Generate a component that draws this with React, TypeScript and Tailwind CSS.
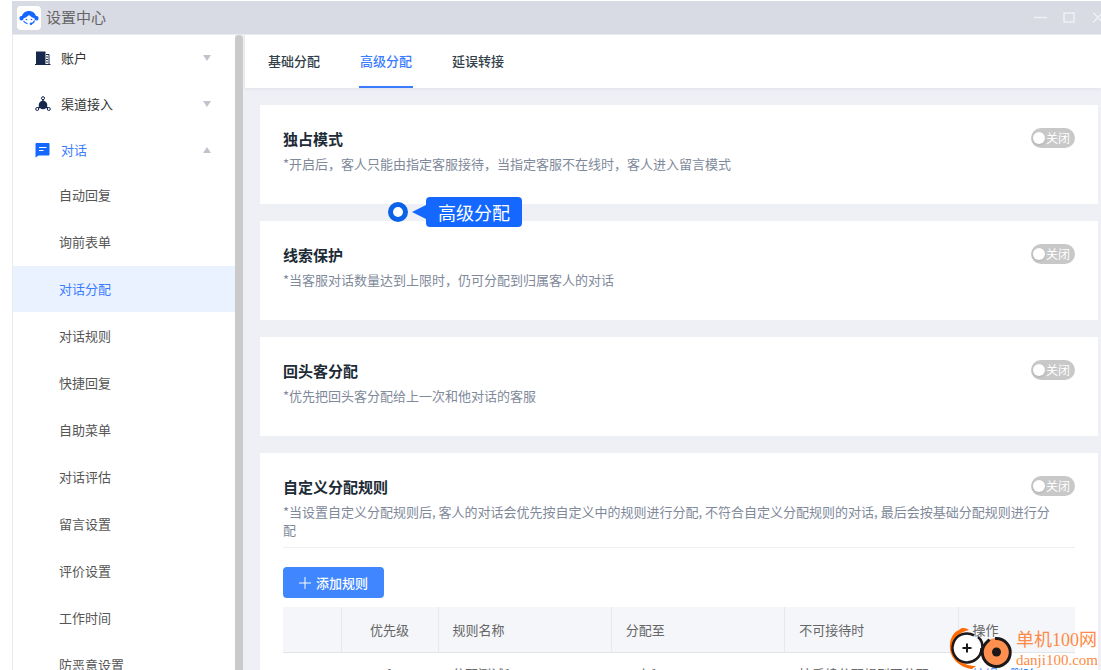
import { useState } from 'react';
import type { ReactNode } from 'react';
import clsx from 'clsx';

const subItems = [
  '自动回复',
  '询前表单',
  '对话分配',
  '对话规则',
  '快捷回复',
  '自助菜单',
  '对话评估',
  '留言设置',
  '评价设置',
  '工作时间',
  '防恶意设置',
];

const tabs = ['基础分配', '高级分配', '延误转接'];

function Logo() {
  return (
    <span className="flex h-6 w-6 items-center justify-center rounded bg-white">
      <svg viewBox="0 0 20 16" className="h-4 w-5">
        <path d="M2.500 7.500C3.500 3 6.500 1 10 1s6.500 2 7.500 6.500l-2.300.8C13.500 7.500 11.500 6.500 10 5 8.500 6.500 6.500 7.500 4.800 8.300z" fill="#1467ff" />
        <rect x="0.500" y="6" width="4" height="4.500" rx="1.800" fill="#1467ff" />
        <rect x="15.500" y="6" width="4" height="4.500" rx="1.800" fill="#1467ff" />
        <circle cx="7.500" cy="9.500" r="0.800" fill="#1467ff" />
        <circle cx="12.500" cy="9.500" r="0.800" fill="#1467ff" />
        <path d="M4.500 11c1 1.600 2.500 2.300 4 2.600M15.500 10.500c-.4 1.800-1.500 2.800-3 3.200" fill="none" stroke="#1467ff" strokeWidth="1.200" />
        <circle cx="12" cy="13.800" r="1.300" fill="#1467ff" />
      </svg>
    </span>
  );
}

function AccountIcon() {
  return (
    <svg viewBox="0 0 16 15" className="h-[15px] w-4">
      <path d="M1 0.500h9.500v13H1z" fill="#16284c" />
      <path d="M0 13.500h15.500M11 3.500h3v10" fill="none" stroke="#16284c" strokeWidth="1" />
      <path d="M11 6h2M11 8.500h2M11 11h2" stroke="#16284c" strokeWidth="1" />
    </svg>
  );
}

function ChannelIcon() {
  return (
    <svg viewBox="0 0 16 16" className="h-4 w-4">
      <circle cx="8" cy="9" r="4.300" fill="#16284c" />
      <path d="M8 3v4M5 11l-2.500 1.500M11 11l2.500 1.500" stroke="#16284c" strokeWidth="1.500" />
      <g fill="#fff" stroke="#16284c" strokeWidth="1">
        <circle cx="8" cy="2.200" r="1.500" />
        <circle cx="2.200" cy="13" r="1.500" />
        <circle cx="13.800" cy="13" r="1.500" />
      </g>
    </svg>
  );
}

function ChatIcon() {
  return (
    <svg viewBox="0 0 16 16" className="h-4 w-4">
      <path d="M1.500 1h12a1 1 0 0 1 1 1v10.500a1 1 0 0 1-1 1H3.500l-3 2V2a1 1 0 0 1 1-1z" fill="#1467ff" />
      <path d="M4 5.500h7.500M4 8.500h4.500" stroke="#fff" strokeWidth="1.200" />
    </svg>
  );
}

const groups = [
  { label: '账户', icon: <AccountIcon />, open: false },
  { label: '渠道接入', icon: <ChannelIcon />, open: false },
  { label: '对话', icon: <ChatIcon />, open: true },
];

function TitleBar() {
  return (
    <header className="mt-px flex h-[34px] shrink-0 items-center justify-between overflow-hidden border-b border-[#e9eaf0] bg-[#d8dae4] pl-[5px]">
      <div className="flex items-center gap-[5px]">
        <Logo />
        <h1 className="text-[15px] text-[#666]">设置中心</h1>
      </div>
      <div className="-mr-1 flex items-center gap-4 text-[#f0f1f5]">
        <button aria-label="最小化">
          <svg viewBox="0 0 13 13" className="h-[13px] w-[13px]">
            <path d="M0 6.500h13" stroke="currentColor" strokeWidth="1.500" />
          </svg>
        </button>
        <button aria-label="最大化">
          <svg viewBox="0 0 13 13" className="h-[13px] w-[13px]">
            <rect x="1" y="2" width="10" height="9" fill="none" stroke="currentColor" strokeWidth="1.500" />
          </svg>
        </button>
        <button aria-label="关闭窗口">
          <svg viewBox="0 0 13 13" className="h-[13px] w-[13px]">
            <path d="M1 1.500l10 10M11 1.500l-10 10" stroke="currentColor" strokeWidth="1.300" />
          </svg>
        </button>
      </div>
    </header>
  );
}

function Sidebar() {
  const [active, setActive] = useState('对话分配');

  return (
    <nav className="w-[222px] shrink-0 bg-white">
      {groups.map((g) => (
        <button
          key={g.label}
          aria-expanded={g.open}
          className={clsx('flex h-[46px] w-full items-center pl-[22px] pr-6', g.open ? 'text-[#3b7cff]' : 'text-[#333]')}
        >
          {g.icon}
          <span className="ml-[10px]">{g.label}</span>
          <svg viewBox="0 0 8 6" className="ml-auto h-[6px] w-2">
            <path d={g.open ? 'M0 6L4 0l4 6z' : 'M0 0l4 6 4-6z'} fill="#c0c4cc" />
          </svg>
        </button>
      ))}
      <ul>
        {subItems.map((item) => (
          <li key={item} className="pb-px first:-mt-px">
            <a
              href="#"
              onClick={() => setActive(item)}
              className={clsx(
                'flex h-[46px] items-center pl-[46px]',
                item === active ? 'bg-[#ebf2ff] text-[#3b7cff]' : 'text-[#555]'
              )}
            >
              {item}
            </a>
          </li>
        ))}
      </ul>
    </nav>
  );
}

function Toggle({ label }: { label: string }) {
  return (
    <label className="relative flex h-5 w-11 shrink-0 items-center justify-end rounded-full bg-[#c8c8c8] pr-[5px] text-xs text-white">
      <input
        type="checkbox"
        role="switch"
        aria-label={label}
        className="absolute left-[2px] top-1 h-3 w-3 appearance-none rounded-full bg-white shadow"
      />
      关闭
    </label>
  );
}

function Card({ title, desc, children }: { title: string; desc: ReactNode; children?: ReactNode }) {
  return (
    <section className="bg-white px-[23px] pb-[31px] pt-[23px]">
      <div className="flex items-start justify-between">
        <h2 className="text-[15px] font-bold leading-[22px] text-[#1c2b36]">{title}</h2>
        <Toggle label={title} />
      </div>
      <p className="mt-[5px] leading-[18px] text-[#80899a]">{desc}</p>
      {children}
    </section>
  );
}

function RuleTable() {
  const th = 'h-[45px] border-r border-[#e6e8ec] px-[14px] font-normal';
  const td = 'h-[42px] px-[14px]';

  return (
    <table className="mt-[9px] w-full table-fixed border-collapse text-left text-[#666]">
      <thead>
        <tr className="border-b border-[#e2e4e8] bg-[#f4f6fa]">
          <th className={clsx(th, 'w-[58px]')}></th>
          <th className={clsx(th, 'w-[97px] text-center')}>优先级</th>
          <th className={th}>规则名称</th>
          <th className={th}>分配至</th>
          <th className={th}>不可接待时</th>
          <th className="w-[117px] px-[14px] font-normal">操作</th>
        </tr>
      </thead>
      <tbody>
        <tr>
          <td className={td}>≡</td>
          <td className={clsx(td, 'text-center')}>1</td>
          <td className={td}>分配测试1</td>
          <td className={td}>ctrlr1</td>
          <td className={td}>按后续分配规则再分配</td>
          <td className={clsx(td, 'text-[#3b7cff]')}>
            <a href="#">编辑</a>
            <a href="#" className="ml-3">删除</a>
          </td>
        </tr>
      </tbody>
    </table>
  );
}

function Callout() {
  return (
    <div className="absolute left-[388px] top-[197px] flex items-center">
      <span className="h-5 w-5 rounded-full border-[5px] border-[#0b62e6] bg-white" />
      <svg viewBox="0 0 14 14" className="ml-1 h-[14px] w-[14px]">
        <path d="M0 7L14 0v14z" fill="#1467ff" />
      </svg>
      <span className="rounded-sm bg-[#1467ff] px-3 text-lg leading-[30px] text-white">高级分配</span>
    </div>
  );
}

function Watermark() {
  return (
    <div className="absolute bottom-0 right-[3px] flex items-end gap-[3px] font-['Liberation_Serif','Noto_Sans_CJK_SC',serif] text-[#ff8a45]">
      <svg viewBox="0 0 64 44" className="h-11 w-16">
        <path d="M20 4c-3-2-7-3-10 0C3 7 0 15 1 23c1 11 12 19 22 20l4-3C16 40 5 34 4 23 3 15 8 7 20 4z" fill="#ff6a00" />
        <path d="M25 9.300A14.500 14.500 0 1 0 32.500 22" fill="#fff" stroke="#1c1718" strokeWidth="2.500" />
        <path d="M29 11c4 3 5 9 4 14" fill="none" stroke="#1c1718" strokeWidth="2.500" />
        <circle cx="47.500" cy="26" r="14" fill="#ff8f4f" />
        <path d="M46 12.500A14 14 0 1 1 36.500 17.500M36.500 17.500l4-4" fill="none" stroke="#1c1718" strokeWidth="3" />
        <circle cx="47.500" cy="26" r="4.500" fill="#1c1718" />
        <path d="M13.500 22h9M18 17.500v9" stroke="#1c1718" strokeWidth="2" />
      </svg>
      <div className="flex flex-col whitespace-nowrap">
        <span className="text-lg leading-5">单机100网</span>
        <span className="text-[15px] leading-5">danji100.com</span>
      </div>
    </div>
  );
}

export default function App() {
  const [tab, setTab] = useState('高级分配');

  return (
    <div className="relative h-screen overflow-hidden bg-white pl-3 font-['Noto_Sans_CJK_SC',sans-serif] text-[13px]">
      <div className="flex h-full flex-col">
        <TitleBar />
        <div className="flex min-h-0 flex-1 overflow-hidden border-l border-[#e9eaf0] bg-[#eff0f5]">
          <Sidebar />
          <div className="w-2 shrink-0 rounded-t bg-[#cacaca]" />
          <main className="ml-[2px] min-w-0 flex-1">
            <div className="flex h-[53px] gap-[38px] bg-white pl-[22px] shadow-[0_1px_4px_#dfe1ea]">
              {tabs.map((t) => (
                <button
                  key={t}
                  onClick={() => setTab(t)}
                  className={clsx(
                    'w-[54px] border-b-2 font-medium',
                    t === tab ? 'border-[#3b7cff] text-[#3b7cff]' : 'border-transparent text-[#333f4a]'
                  )}
                >
                  {t}
                </button>
              ))}
            </div>
            <div className="flex flex-col gap-[17px] pl-[15px] pr-[3px] pt-[17px]">
              <Card title="独占模式" desc="*开启后，客人只能由指定客服接待，当指定客服不在线时，客人进入留言模式" />
              <Card title="线索保护" desc="*当客服对话数量达到上限时，仍可分配到归属客人的对话" />
              <Card title="回头客分配" desc="*优先把回头客分配给上一次和他对话的客服" />
              <Card
                title="自定义分配规则"
                desc={
                  <>
                    *当设置自定义分配规则后, 客人的对话会优先按自定义中的规则进行分配, 不符合自定义分配规则的对话, 最后会按基础分配规则进行分
                    <br />
                    配
                  </>
                }
              >
                <hr className="mt-2 border-[#eff0f3]" />
                <button className="mt-[19px] flex h-[31px] items-center gap-[5px] rounded bg-[#3f86ff] px-4 font-medium text-white">
                  <svg viewBox="0 0 12 12" className="h-3 w-3">
                    <path d="M0 6h12M6 0v12" stroke="currentColor" strokeWidth="1" />
                  </svg>
                  添加规则
                </button>
                <RuleTable />
              </Card>
            </div>
          </main>
        </div>
      </div>
      <Callout />
      <Watermark />
    </div>
  );
}
